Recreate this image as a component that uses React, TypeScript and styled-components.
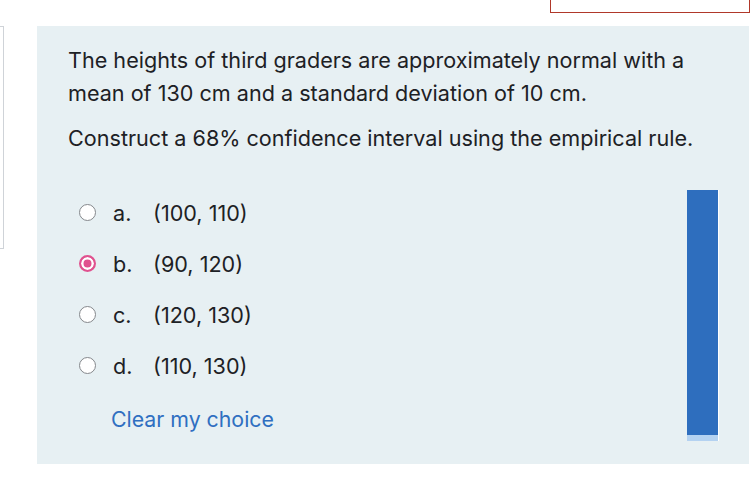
import { FC } from 'react';
import styled, { createGlobalStyle } from 'styled-components';

const GlobalStyle = createGlobalStyle`
  html, body {
    margin: 0;
    padding: 0;
    background: #ffffff;
  }
  body {
    font-family: Inter, 'Noto Sans', 'Liberation Sans', sans-serif;
    color: #1d2125;
    overflow: hidden;
  }
`;

const Page = styled.div`
  position: relative;
  width: 756px;
  height: 492px;
  overflow: hidden;
`;

const TopBar = styled.div`
  display: flex;
  justify-content: flex-end;
  padding-right: 6px;
`;

const FlagBox = styled.div`
  width: 198px;
  height: 12px;
  border: 1px solid #b0382a;
  border-top: none;
  background: #ffffff;
`;

const Body = styled.div`
  display: flex;
  align-items: flex-start;
  margin-top: 13px;
`;

const SideStub = styled.div`
  width: 3px;
  height: 221px;
  border: 1px solid #cfd3d8;
  border-left: none;
  background: #ffffff;
`;

const Panel = styled.div`
  margin-left: 33px;
  width: 712px;
  height: 438px;
  box-sizing: border-box;
  background: #e7f0f3;
  padding: 18px 30px 0 31px;
  display: flex;
  flex-direction: column;
`;

const Question = styled.p`
  margin: 0 0 12px;
  font-size: 21.6px;
  line-height: 33px;
`;

const AnswerArea = styled.div`
  display: flex;
  justify-content: space-between;
  margin-top: 20px;
`;

const Options = styled.div`
  display: flex;
  flex-direction: column;
`;

const OptionRow = styled.label`
  display: flex;
  align-items: center;
  height: 51px;
  font-size: 21.6px;
  padding-left: 11px;
`;

const Radio = styled.span<{ checked?: boolean }>`
  width: 17px;
  height: 17px;
  border-radius: 50%;
  box-sizing: border-box;
  background: ${(p) => (p.checked ? '#e0528f' : '#ffffff')};
  border: ${(p) => (p.checked ? '2px solid #e0528f' : '1px solid #85888c')};
  box-shadow: ${(p) => (p.checked ? 'inset 0 0 0 2.5px #ffffff' : 'none')};
  margin-right: 17px;
`;

const Letter = styled.span`
  width: 40px;
`;

const ClearLink = styled.a`
  color: #2f6fc1;
  font-size: 21.3px;
  text-decoration: none;
  margin-top: 15px;
  padding-left: 43px;
  cursor: pointer;
`;

const ScrollBar = styled.div`
  width: 31px;
  height: 251px;
  margin-top: 3px;
  background: #2e6ebe;
  border-right: 1px solid #ffffff;
  display: flex;
  flex-direction: column;
  justify-content: flex-end;
`;

const ScrollFoot = styled.div`
  height: 6px;
  background: #b4d2f1;
`;

const options = [
  { letter: 'a.', value: '(100, 110)', checked: false },
  { letter: 'b.', value: '(90, 120)', checked: true },
  { letter: 'c.', value: '(120, 130)', checked: false },
  { letter: 'd.', value: '(110, 130)', checked: false },
];

const App: FC = () => {
  return (
    <Page>
      <GlobalStyle />
      <TopBar>
        <FlagBox />
      </TopBar>
      <Body>
        <SideStub />
        <Panel>
          <Question>
            The heights of third graders are approximately normal with a
            <br />
            mean of 130 cm and a standard deviation of 10 cm.
          </Question>
          <Question>Construct a 68% confidence interval using the empirical rule.</Question>
          <AnswerArea>
            <Options>
              {options.map((o) => (
                <OptionRow key={o.letter}>
                  <Radio checked={o.checked} />
                  <Letter>{o.letter}</Letter>
                  <span>{o.value}</span>
                </OptionRow>
              ))}
              <ClearLink>Clear my choice</ClearLink>
            </Options>
            <ScrollBar>
              <ScrollFoot />
            </ScrollBar>
          </AnswerArea>
        </Panel>
      </Body>
    </Page>
  );
};

export default App;
